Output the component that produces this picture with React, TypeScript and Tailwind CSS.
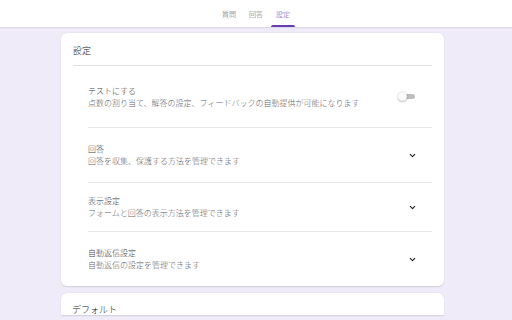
import { ChevronDown } from 'lucide-react';

const font = { fontFamily: '"Noto Sans CJK JP", "Noto Sans", sans-serif' };

type Row = { title: string; desc: string; h: string; toggle?: boolean };

const rows: Row[] = [
  { title: 'テストにする', desc: '点数の割り当て、解答の設定、フィードバックの自動提供が可能になります', h: 'h-[62px]', toggle: true },
  { title: '回答', desc: '回答を収集、保護する方法を管理できます', h: 'h-[55px]' },
  { title: '表示設定', desc: 'フォームと回答の表示方法を管理できます', h: 'h-[49px]' },
  { title: '自動返信設定', desc: '自動返信の設定を管理できます', h: 'h-[54px]' },
];

function Toggle() {
  return (
    <div className="relative w-[18px] h-[9px] flex items-center">
      <div className="ml-[3px] w-[14px] h-[5px] rounded-full bg-[#bdbdbd]" />
      <div className="absolute left-0 top-0 w-[9px] h-[9px] rounded-full bg-[#fafafa] shadow-[0_0.5px_2px_rgba(0,0,0,0.4)]" />
    </div>
  );
}

export default function App() {
  const tabs = ['質問', '回答', '設定'];
  return (
    <div className="w-[512px] h-[320px] bg-[#f0ebf8] overflow-hidden flex flex-col font-light" style={font}>
      {/* Header tabs */}
      <div className="h-[27px] bg-white shrink-0 flex justify-center items-end gap-[3px] shadow-[0_1px_1px_rgba(0,0,0,0.08)]">
        {tabs.map((t, i) => (
          <div key={t} className="flex flex-col items-center">
            <span className={`px-[5px] text-[7px] leading-[10px] ${i === 2 ? 'text-[#673ab7]' : 'text-[#5f6368]'}`}>{t}</span>
            <div className={`mt-[6px] h-[2px] w-full rounded-t-sm ${i === 2 ? 'bg-[#673ab7]' : 'bg-transparent'}`} />
          </div>
        ))}
      </div>

      {/* Settings card */}
      <div className="ml-[61px] mt-[6px] w-[383px] bg-white rounded-[6px] shadow-[0_0.5px_1.5px_rgba(0,0,0,0.12)] shrink-0">
        <div className="mx-[12px] h-[33px] flex items-center border-b border-[#e0e0e0] pt-[4px]">
          <span className="text-[9px] text-[#202124]">設定</span>
        </div>
        <div className="ml-[27px] mr-[12px]">
          {rows.map((r, i) => (
            <div key={r.title} className={`${r.h} flex items-center ${i < rows.length - 1 ? 'border-b border-[#e8e8e8]' : ''}`}>
              <div className="flex-1 flex flex-col">
                <span className="text-[8px] leading-[12px] text-[#3c4043]">{r.title}</span>
                <span className="text-[8px] leading-[12px] text-[#5f6368]">{r.desc}</span>
              </div>
              {r.toggle ? (
                <div className="mr-[16px]"><Toggle /></div>
              ) : (
                <ChevronDown size={9} strokeWidth={3} className="mr-[15px] text-[#202124]" />
              )}
            </div>
          ))}
        </div>
      </div>

      {/* Default card (clipped) */}
      <div className="ml-[61px] mt-[7px] w-[383px] h-[22px] bg-white rounded-t-[6px] shadow-[0_0.5px_1.5px_rgba(0,0,0,0.12)] overflow-hidden shrink-0">
        <div className="pl-[11px] pt-[11px] text-[9px] leading-[12px] text-[#202124]">デフォルト</div>
      </div>
    </div>
  );
}
